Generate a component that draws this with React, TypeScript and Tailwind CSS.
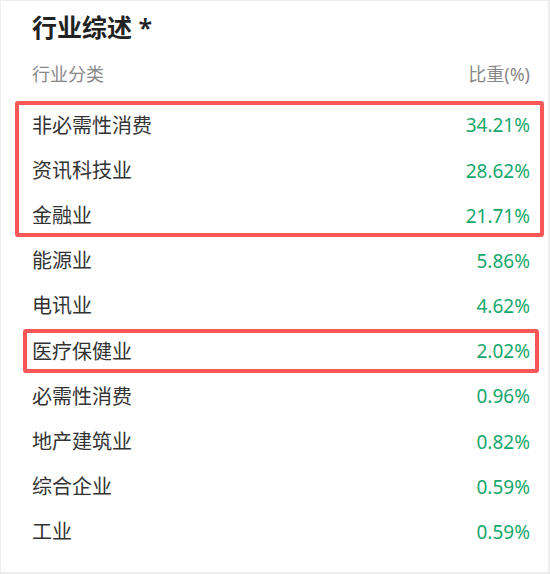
import React from 'react'

interface Row {
  name: string
  pct: string
}

const rows: Row[] = [
  { name: '非必需性消费', pct: '34.21%' },
  { name: '资讯科技业', pct: '28.62%' },
  { name: '金融业', pct: '21.71%' },
  { name: '能源业', pct: '5.86%' },
  { name: '电讯业', pct: '4.62%' },
  { name: '医疗保健业', pct: '2.02%' },
  { name: '必需性消费', pct: '0.96%' },
  { name: '地产建筑业', pct: '0.82%' },
  { name: '综合企业', pct: '0.59%' },
  { name: '工业', pct: '0.59%' },
]

const font = { fontFamily: '"Noto Sans", "Noto Sans CJK SC", sans-serif' }

const App: React.FC = () => {
  return (
    <div className="w-[550px] h-[574px] bg-[#eeeeee] pl-px pt-px" style={font}>
      <div className="relative w-[547px] h-[571px] bg-white">
        <div className="h-[51px] flex items-center pl-[31px]">
          <h2 className="text-[25px] leading-8 font-semibold text-[#222]">行业综述 *</h2>
        </div>

        <div className="h-[45px] flex items-center justify-between pl-[31px] pr-[18px] text-[18px] text-[#888]">
          <span>行业分类</span>
          <span>比重(%)</span>
        </div>

        <ul className="mt-[6px]">
          {rows.map((row) => (
            <li
              key={row.name}
              className="h-[45.2px] flex items-center justify-between pl-[31px] pr-[18px]"
            >
              <span className="text-[20px] text-[#333]">{row.name}</span>
              <span className="text-[19px] text-[#17a86c]">{row.pct}</span>
            </li>
          ))}
        </ul>

        {/* highlight boxes drawn over the list */}
        <div className="absolute left-[14px] top-[100px] w-[529px] h-[136px] border-[4px] border-[#f75757] rounded-[3px]" />
        <div className="absolute left-[22px] top-[328px] w-[516px] h-[44px] border-[4px] border-[#f75757] rounded-[3px]" />
      </div>
    </div>
  )
}

export default App
